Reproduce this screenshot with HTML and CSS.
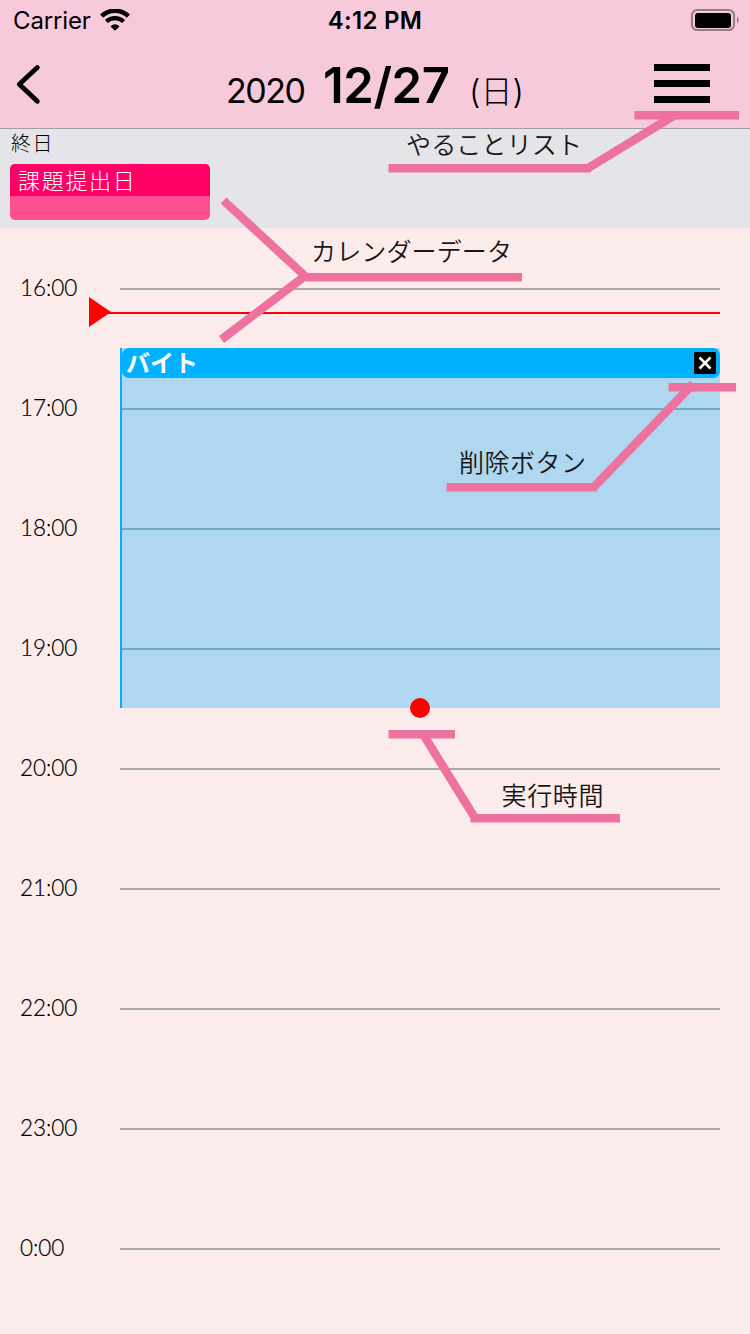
FILE: index.html
```html
<!DOCTYPE html>
<html lang="ja">
<head>
<meta charset="utf-8">
<title>2020 12/27</title>
<link rel="stylesheet" href="styles.css">
</head>
<body>
<div class="screen">
  <header class="header">
    <div class="status">
      <div class="carrier"><span>Carrier</span>
        <svg class="wifi" width="30" height="22" viewBox="0 0 30 22"><path d="M1.6 7.2A19.2 19.2 0 0 1 28.4 7.2" fill="none" stroke="#000" stroke-width="4.4"/><path d="M6.4 12.6A12.4 12.4 0 0 1 23.6 12.6" fill="none" stroke="#000" stroke-width="4.2"/><path d="M10.5 17.4Q15 13.1 19.5 17.4L15 21.7Z"/></svg>
      </div>
      <div class="clock">4:12 PM</div>
      <svg class="battery" width="50" height="24" viewBox="0 0 50 24"><rect x="1.9" y="1.9" width="42.2" height="20.2" rx="5.5" fill="none" stroke="#937c84" stroke-width="2"/><rect x="5" y="5" width="36" height="15" rx="3"/><path d="M47 8.5Q50.5 12 47 15.5Z" fill="#937c84"/></svg>
    </div>
    <div class="nav">
      <svg class="back" width="26" height="42" viewBox="0 0 26 42"><path d="M22.3 4.5L4.3 21.3L22.3 38.3" fill="none" stroke="#000" stroke-width="4.8" stroke-linecap="round" stroke-linejoin="round"/></svg>
      <div class="title"><span class="year">2020</span><strong class="date">12/27</strong><span class="weekday">(<span class="kanji">日</span>)</span></div>
      <div class="menu"><i></i><i></i><i></i></div>
    </div>
  </header>
  <section class="allday">
    <div class="allday-label">終日</div>
    <div class="allday-event"><div class="allday-title">課題提出日</div></div>
  </section>
  <main class="timeline">
    <div class="hour"><span>16:00</span></div>
    <div class="hour"><span>17:00</span></div>
    <div class="hour"><span>18:00</span></div>
    <div class="hour"><span>19:00</span></div>
    <div class="hour"><span>20:00</span></div>
    <div class="hour"><span>21:00</span></div>
    <div class="hour"><span>22:00</span></div>
    <div class="hour"><span>23:00</span></div>
    <div class="hour"><span>0:00</span></div>
    <div class="now"></div>
    <div class="event">
      <div class="event-bar"><span>バイト</span>
        <svg class="close" width="22" height="22" viewBox="0 0 22 22"><rect width="22" height="22" rx="1.5"/><path d="M5.5 5.5L16.5 16.5M16.5 5.5L5.5 16.5" stroke="#fff" stroke-width="2.6"/></svg>
      </div>
      <div class="handle"></div>
    </div>
  </main>
  <svg class="notes" width="750" height="1334" viewBox="0 0 750 1334">
    <g class="leaders">
      <path d="M634.5 115.3H739M388.5 168.2H591M588 168.2L675 115"/>
      <path d="M223.5 200.5L305 276M221.5 339.5L305 276M303 277.3H522"/>
      <path d="M668.5 387.3H736M446.5 487.3H597M593 488L693 384"/>
      <path d="M388.5 734.3H455M470.5 818.3H620M422 732.5L475 818"/>
    </g>
    <g class="note-text">
      <text x="406" y="153.5" textLength="176">やることリスト</text>
      <text x="311" y="261" textLength="201">カレンダーデータ</text>
      <text x="459" y="472" textLength="127">削除ボタン</text>
      <text x="501.5" y="804.5" textLength="102">実行時間</text>
    </g>
  </svg>
</div>
</body>
</html>
```
FILE: styles.css
```css
* { box-sizing: border-box; }
body { margin: 0; }
.screen { position: relative; width: 750px; height: 1334px; overflow: hidden; background: #fbebea; color: #000; font-family: Inter, "Noto Sans CJK JP", sans-serif; display: flex; flex-direction: column; }
.header { height: 129px; background: #f7cadb; border-bottom: 1px solid #a09da5; flex: none; }
.status { height: 40px; display: grid; grid-template-columns: 1fr auto 1fr; align-items: center; padding: 0 10px 0 13px; font-size: 24px; }
.status span, .clock { line-height: 38px; padding-top: 2px; }
.carrier { display: flex; align-items: center; gap: 9px; letter-spacing: -0.15px; }
.clock { font-weight: 600; letter-spacing: 0.3px; margin-left: -3px; }
.battery { justify-self: end; }
.nav { height: 88px; display: grid; grid-template-columns: 227px 1fr 98px; align-items: start; }
.back { margin: 23px 0 0 15px; }
.title { display: flex; align-items: baseline; line-height: 92px; height: 88px; white-space: nowrap; margin-left: -1px; }
.year { font-size: 34px; width: 97px; letter-spacing: -1.5px; font-weight: 400; }
.date { font-size: 49px; width: 146px; font-weight: 600; letter-spacing: -0.4px; }
.weekday { font-size: 33px; font-weight: 300; }
.kanji { font-family: "Noto Sans CJK JP", sans-serif; font-size: 32px; line-height: 1; }
.menu { width: 56px; display: flex; flex-direction: column; gap: 9px; padding-top: 23.500px; margin-left: 2px; }
.menu i { height: 7px; background: #000; }
.allday { height: 99px; background: #e5e4e9; padding: 0 10px; flex: none; font-family: "Noto Sans CJK JP", sans-serif; font-weight: 300; }
.allday-label { height: 35px; line-height: 27px; font-size: 20px; padding-left: 1px; letter-spacing: 1.5px; }
.allday-event { width: 200px; height: 56px; border-radius: 5px; background: #ff4f91; }
.allday-title { height: 32px; border-radius: 5px 5px 0 0; background: #ff0066; color: #fff; line-height: 30px; font-size: 22px; letter-spacing: 1.7px; padding-left: 8px; font-weight: 300; }
.timeline { position: relative; flex: 1; }
.hour { height: 120px; display: flex; align-items: center; font-family: Lato, sans-serif; font-size: 22.5px; font-weight: 300; padding: 2px 30px 0 20px; letter-spacing: -0.1px; -webkit-text-stroke: 0.2px #000; }
.hour span { width: 100px; line-height: 26px; padding-bottom: 2px; }
.hour::after { content: ""; flex: 1; height: 2px; background: #aaa9aa; }
.now { position: absolute; left: 89px; right: 30px; top: 84px; height: 2px; background: #f00; }
.now::before { content: ""; position: absolute; left: 0; top: -15px; border-left: 22px solid #f00; border-top: 15px solid transparent; border-bottom: 15px solid transparent; }
.event { position: absolute; left: 120px; right: 30px; top: 120px; height: 360px; border-left: 2px solid #00b1ff; background: repeating-linear-gradient(to bottom, #afd8f0 0 60px, #73aac3 60px 62px, #afd8f0 62px 120px); }
.event-bar { height: 30px; background: #00b1ff; border-radius: 7px; display: flex; align-items: center; justify-content: space-between; padding: 0 4px; color: #fff; font-family: "Noto Sans CJK JP", sans-serif; font-size: 24px; font-weight: 700; }
.event-bar span { line-height: 28px; padding-bottom: 2px; }
.handle { position: absolute; left: 288px; bottom: -10px; width: 20px; height: 20px; border-radius: 50%; background: #f00; }
.notes { position: absolute; left: 0; top: 0; }
.leaders { fill: none; stroke: #ee72a0; stroke-width: 8.5; }
.note-text { font-family: "Noto Sans CJK JP", sans-serif; font-size: 25px; font-weight: 350; fill: #171717; }
```
